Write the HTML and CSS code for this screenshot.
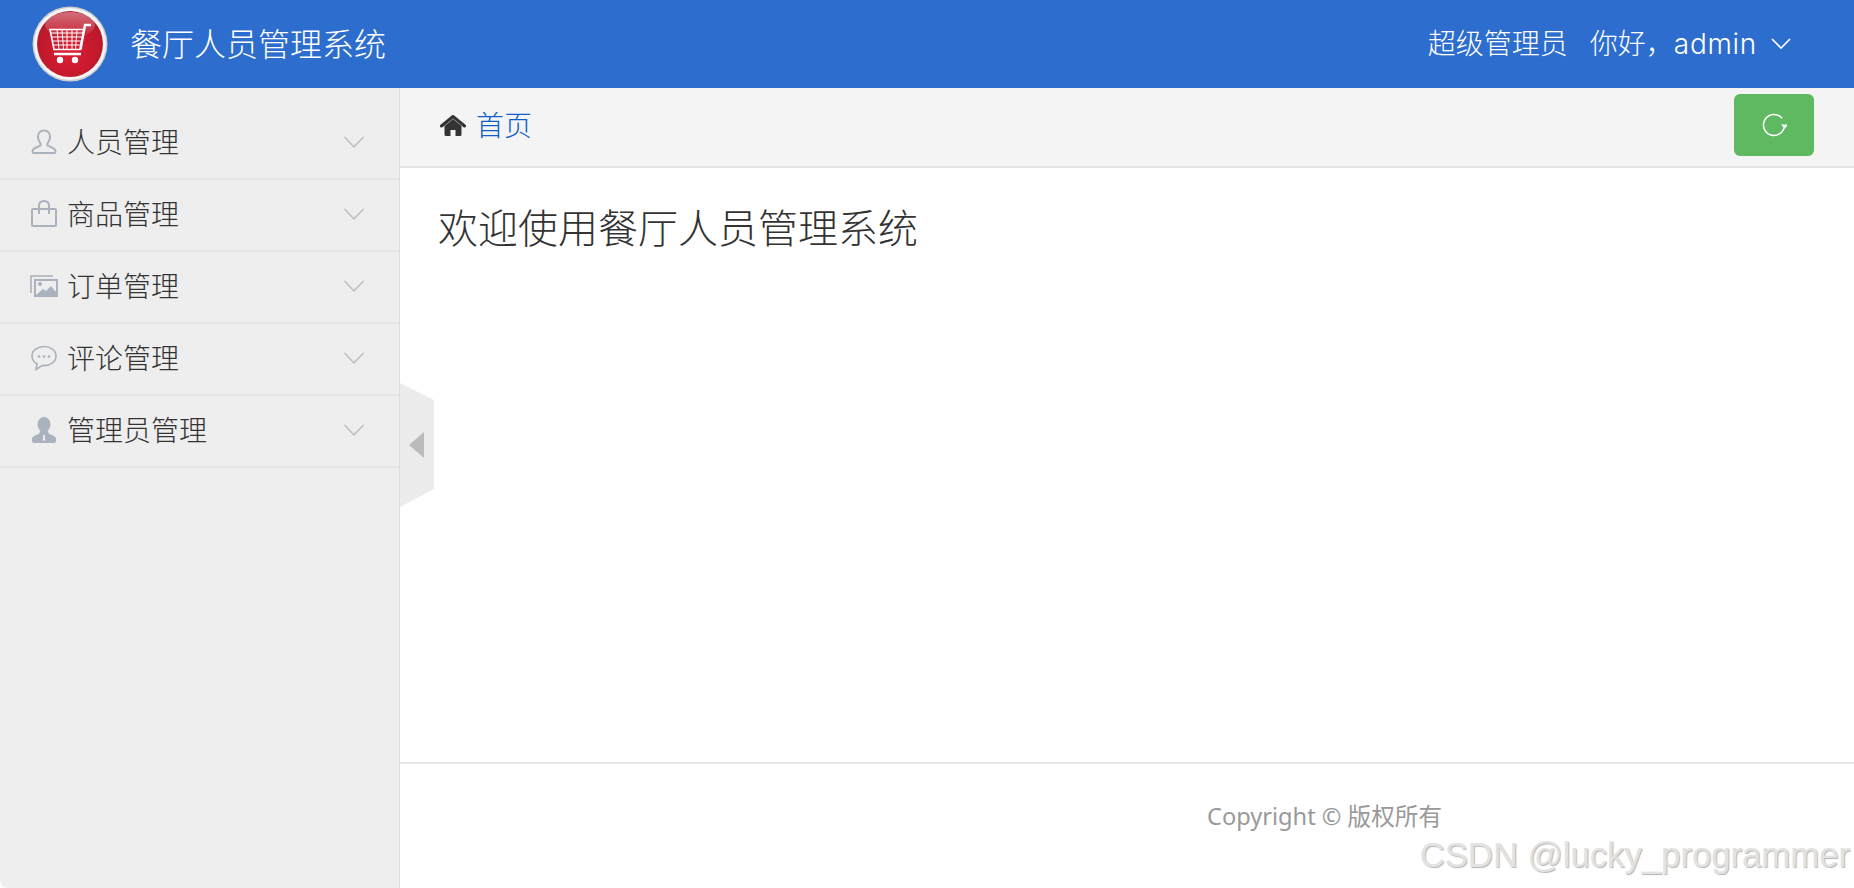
FILE: index.html
```html
<!DOCTYPE html>
<html lang="zh-CN">
<head>
  <meta charset="UTF-8" />
  <meta name="viewport" content="width=device-width, initial-scale=1.0" />
  <title>餐厅人员管理系统</title>
  <link rel="stylesheet" href="styles.css">
</head>
<body>
  <header class="topbar">
    <div class="brand">
      <svg class="logo" viewBox="0 0 76 76" width="76" height="76">
        <defs>
          <radialGradient id="ball" cx="50%" cy="62%" r="60%">
            <stop offset="0" stop-color="#e01d33"/>
            <stop offset="1" stop-color="#b5172a"/>
          </radialGradient>
          <linearGradient id="shine" x1="0" y1="0" x2="0" y2="1">
            <stop offset="0" stop-color="#fff" stop-opacity=".38"/>
            <stop offset="1" stop-color="#fff" stop-opacity=".03"/>
          </linearGradient>
        </defs>
        <circle cx="38" cy="38" r="37.5" fill="#cfcfcf"/>
        <circle cx="38" cy="38" r="36" fill="#f6f6f6"/>
        <circle cx="38" cy="38" r="33" fill="url(#ball)"/>
        <ellipse cx="38" cy="19" rx="25" ry="13" fill="url(#shine)"/>
        <g fill="none" stroke="#fff">
          <path d="M19 27H51M20 31H50M21 35H49M22 39H48" stroke-width="1"/>
          <path d="M25 24l2 19M30 24l1.500 19M35 24v19M40 24v19M45 24l-1.500 19" stroke-width="1"/>
          <path d="M18 23.500h34l-4 20H22z" stroke-width="1.600"/>
          <path d="M48.500 43.500L53 19h6M22 48h27" stroke-width="2.400"/>
        </g>
        <circle cx="28" cy="54" r="3.200" fill="#fff"/>
        <circle cx="43" cy="54" r="3.200" fill="#fff"/>
      </svg>
      <span class="brand-name">餐厅人员管理系统</span>
    </div>
    <div class="user">
      <span class="user-role">超级管理员</span>
      <span class="user-hello">你好，<span class="user-name">admin</span></span>
      <svg class="user-arrow" viewBox="0 0 20 12" width="20" height="12"><path d="M1 1l9 9 9-9" fill="none" stroke="#fff" stroke-width="1.600"/></svg>
    </div>
  </header>

  <div class="layout">
    <aside class="sidebar">
      <ul class="menu">
        <li class="menu-item">
          <svg class="menu-icon" viewBox="0 0 26 26" width="26" height="26"><path d="M13 1.500c-4 0-6 3-6 6.500 0 3 1.500 5 2.500 6.500v2c-2 1.500-8 2-8 6 0 1 .5 1.500 1.500 1.500h20c1 0 1.500-.5 1.500-1.500 0-4-6-4.500-8-6v-2c1-1.500 2.500-3.500 2.500-6.500 0-3.500-2-6.500-6-6.500z" fill="none" stroke="#aab2bd" stroke-width="2"/></svg>
          <span class="menu-text">人员管理</span>
          <svg class="menu-arrow" viewBox="0 0 20 12" width="20" height="12"><path d="M.5 1l9.500 10 9.500-10" fill="none" stroke="#bcbcbc" stroke-width="1.300"/></svg>
        </li>
        <li class="menu-item">
          <svg class="menu-icon" viewBox="0 0 26 28" width="26" height="28"><path d="M2 9h22a1 1 0 0 1 1 1v15a1 1 0 0 1-1 1H2a1 1 0 0 1-1-1V10a1 1 0 0 1 1-1z" fill="none" stroke="#aab2bd" stroke-width="2"/><path d="M8 14V6c0-3 2-5 5-5s5 2 5 5v8" fill="none" stroke="#aab2bd" stroke-width="2"/></svg>
          <span class="menu-text">商品管理</span>
          <svg class="menu-arrow" viewBox="0 0 20 12" width="20" height="12"><path d="M.5 1l9.500 10 9.500-10" fill="none" stroke="#bcbcbc" stroke-width="1.300"/></svg>
        </li>
        <li class="menu-item">
          <svg class="menu-icon" viewBox="0 0 28 22" width="28" height="22"><path d="M1 18V1h22" fill="none" stroke="#aab2bd" stroke-width="1.600"/><path d="M4 4h24v18H4z" fill="#aab2bd"/><path d="M6 6h20v11l-5-6-5 5-3-2-7 6z" fill="#eee"/><circle cx="10" cy="9" r="2" fill="#aab2bd"/></svg>
          <span class="menu-text">订单管理</span>
          <svg class="menu-arrow" viewBox="0 0 20 12" width="20" height="12"><path d="M.5 1l9.500 10 9.500-10" fill="none" stroke="#bcbcbc" stroke-width="1.300"/></svg>
        </li>
        <li class="menu-item">
          <svg class="menu-icon" viewBox="0 0 26 26" width="26" height="26"><path d="M13 1.500C6.500 1.500 1 5.500 1 11c0 3.500 2 6 5 8l-1 5.500 6-4c.7.100 1.300.100 2 .100 6.500 0 12-4 12-9.600s-5.500-9.500-12-9.500z" fill="none" stroke="#aab2bd" stroke-width="1.600"/><circle cx="8" cy="11.500" r="1.300" fill="#aab2bd"/><circle cx="13" cy="11.500" r="1.300" fill="#aab2bd"/><circle cx="18" cy="11.500" r="1.300" fill="#aab2bd"/></svg>
          <span class="menu-text">评论管理</span>
          <svg class="menu-arrow" viewBox="0 0 20 12" width="20" height="12"><path d="M.5 1l9.500 10 9.500-10" fill="none" stroke="#bcbcbc" stroke-width="1.300"/></svg>
        </li>
        <li class="menu-item">
          <svg class="menu-icon" viewBox="0 0 26 26" width="26" height="26"><ellipse cx="13" cy="7.500" rx="6.500" ry="7.500" fill="#aab2bd"/><path d="M9 14h8l1 3c3 1 6 2 7 4v3c0 1-1 2-2 2H3c-1 0-2-1-2-2v-3c1-2 4-3 7-4z" fill="#aab2bd"/><path d="M12 18h2l-.2 1.500.5 4h-2.600l.5-4z" fill="#eee"/></svg>
          <span class="menu-text">管理员管理</span>
          <svg class="menu-arrow" viewBox="0 0 20 12" width="20" height="12"><path d="M.5 1l9.500 10 9.500-10" fill="none" stroke="#bcbcbc" stroke-width="1.300"/></svg>
        </li>
      </ul>
      <div class="sidebar-toggle"><span class="toggle-arrow"></span></div>
    </aside>

    <main class="main">
      <div class="crumbs">
        <div class="crumb-left">
          <svg class="home-icon" viewBox="0 0 26 22" width="26" height="22"><path d="M13 5L4.500 12v8.500a1.500 1.500 0 0 0 1.500 1.500h4.500v-6h5v6H20a1.500 1.500 0 0 0 1.500-1.500V12z" fill="#333"/><path d="M1.500 12L13 2.500 24.500 12" fill="none" stroke="#333" stroke-width="3" stroke-linecap="round" stroke-linejoin="round"/></svg>
          <a class="crumb-link" href="#">首页</a>
        </div>
        <button class="refresh-btn" type="button">
          <svg viewBox="0 0 26 26" width="26" height="26"><path d="M23.500 13a10.500 10.500 0 1 1-2.300-6.600" fill="none" stroke="#fff" stroke-width="1.500"/><path d="M20 12.500h7.500l-3.700 4z" fill="#fff"/></svg>
        </button>
      </div>
      <div class="content">
        <h1 class="welcome">欢迎使用餐厅人员管理系统</h1>
      </div>
      <footer class="footer">Copyright © 版权所有</footer>
    </main>
  </div>

  <div class="watermark">CSDN @lucky_programmer</div>
</body>
</html>
```

FILE: styles.css
```css
* {
  box-sizing: border-box;
}
html, body {
  height: 100%;
}
body {
  margin: 0;
  overflow: hidden;
  font-family: "Inter", "Noto Sans CJK SC", sans-serif;
  color: #333;
  background-color: #fff;
}
.topbar {
  height: 88px;
  padding: 0 63px 0 32px;
  display: flex;
  justify-content: space-between;
  align-items: center;
  background-color: #2d6dcd;
  color: #fff;
}
.brand {
  display: flex;
  align-items: center;
}
.logo {
  margin-right: 22px;
}
.brand-name {
  font-size: 32px;
  font-weight: 300;
  margin-top: -5px;
}
.user {
  display: flex;
  align-items: center;
  font-size: 28px;
  font-weight: 300;
}
.user-role, .user-hello {
  margin-top: -4px;
}
.user-role {
  margin-right: 22px;
}
.user-name {
  letter-spacing: .7px;
}
.user-arrow {
  margin-left: 14px;
}
.layout {
  display: flex;
  height: 800px;
}
.sidebar {
  position: relative;
  width: 400px;
  flex-shrink: 0;
  padding-top: 20px;
  background-color: #eee;
  border-right: 1px solid #ddd;
  border-bottom-left-radius: 8px;
}
.menu {
  list-style: none;
  margin: 0;
  padding: 0;
}
.menu-item {
  height: 72px;
  padding: 0 35px 0 30px;
  display: flex;
  align-items: center;
  border-bottom: 2px solid #e5e5e5;
  font-size: 28px;
  font-weight: 300;
}
.menu-icon {
  width: 28px;
  flex-shrink: 0;
  margin: -2px 9px 0 0;
}
.menu-text {
  flex: 1;
  margin-top: -5px;
}
.menu-arrow {
  margin-top: -2px;
}
.sidebar-toggle {
  position: absolute;
  top: 295px;
  left: 400px;
  width: 34px;
  height: 124px;
  background-color: #ececec;
  clip-path: polygon(0 0, 100% 17px, 100% 106px, 0 100%);
}
.toggle-arrow {
  position: absolute;
  top: 49px;
  left: 9px;
  border-style: solid;
  border-width: 13px 15px 13px 0;
  border-color: transparent #bbb transparent transparent;
}
.main {
  flex: 1;
  display: flex;
  flex-direction: column;
}
.crumbs {
  height: 80px;
  padding: 6px 40px 0;
  display: flex;
  justify-content: space-between;
  align-items: flex-start;
  background-color: #f4f4f4;
  border-bottom: 2px solid #e5e5e5;
}
.crumb-left {
  display: flex;
  align-items: center;
  height: 64px;
}
.home-icon {
  margin-right: 10px;
  margin-top: -3px;
}
.crumb-link {
  color: #0f5fc8;
  text-decoration: none;
  font-size: 28px;
  font-weight: 300;
  margin-top: -4px;
}
.refresh-btn {
  width: 80px;
  height: 62px;
  padding: 0;
  display: flex;
  justify-content: center;
  align-items: center;
  background-color: #5fb960;
  border: none;
  border-radius: 6px;
}
.content {
  flex: 1;
  padding: 36px 38px;
}
.welcome {
  margin: 0;
  font-size: 40px;
  font-weight: 300;
  line-height: 50px;
}
.footer {
  height: 126px;
  padding: 34px 0 0 807px;
  border-top: 2px solid #e5e5e5;
  font-family: "Noto Sans", "Noto Sans CJK SC", sans-serif;
  font-size: 23.6px;
  color: #999;
}
.watermark {
  position: absolute;
  right: 4px;
  bottom: 13px;
  font-family: "Liberation Sans", sans-serif;
  font-size: 34.7px;
  color: #e2e2e2;
  text-shadow: 1px 1px 1px #b5b5b5;
}
```
